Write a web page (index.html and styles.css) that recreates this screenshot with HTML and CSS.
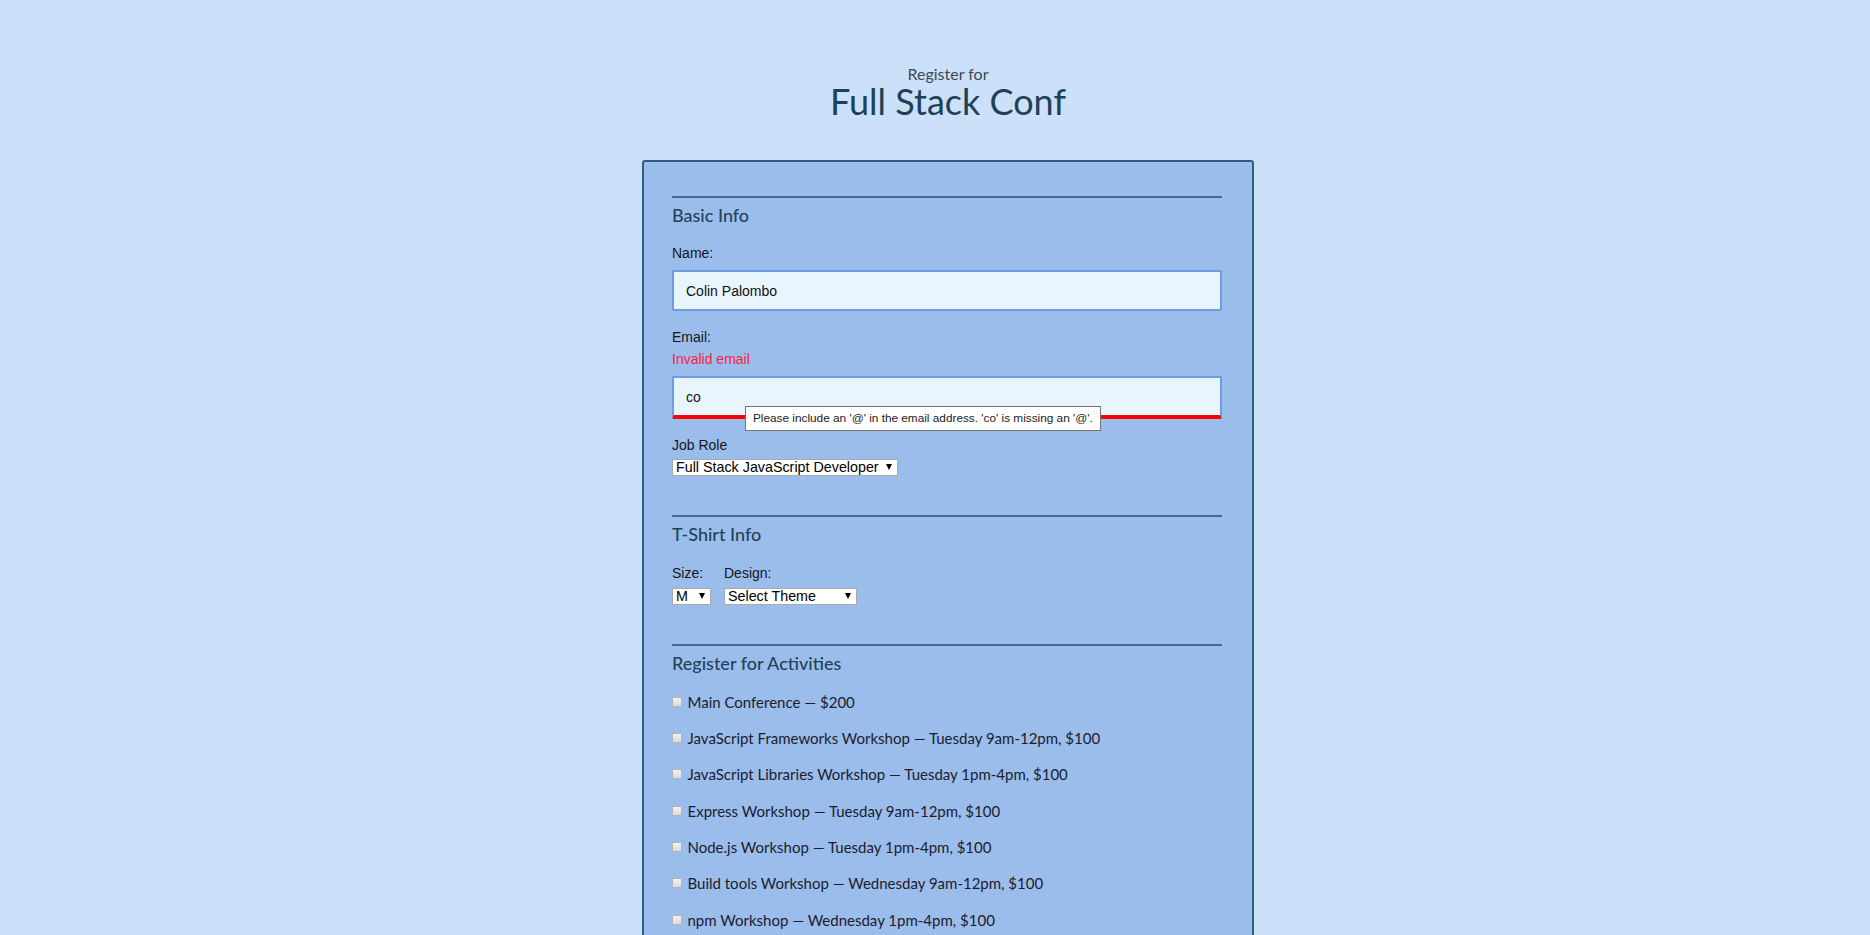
FILE: index.html
```html
<!DOCTYPE html>
<html lang="en">
<head>
<meta charset="utf-8">
<title>Full Stack Conf</title>
<link rel="stylesheet" href="styles.css">
</head>
<body>
<div class="page">
  <header class="masthead">
    <span class="pre">Register for</span>
    <h1 class="title">Full Stack Conf</h1>
  </header>

  <form class="form" novalidate>
    <section class="sec">
      <h2 class="sec-h">Basic Info</h2>
      <label class="lbl" for="name">Name:</label>
      <input class="txt" type="text" id="name" value="Colin Palombo">

      <label class="lbl" for="mail">Email:</label>
      <p class="err">Invalid email</p>
      <div class="field">
        <input class="txt txt-invalid" type="email" id="mail" value="co">
        <div class="tip">Please include an '@' in the email address. 'co' is missing an '@'.</div>
      </div>

      <label class="lbl" for="title">Job Role</label>
      <div class="sel-row">
        <span class="sel sel-job"><select id="title"><option>Full Stack JavaScript Developer</option></select></span>
      </div>
    </section>

    <section class="sec">
      <h2 class="sec-h">T-Shirt Info</h2>
      <div class="shirt">
        <div class="shirt-col">
          <label class="lbl lbl-tight" for="size">Size:</label>
          <span class="sel sel-size"><select id="size"><option>M</option></select></span>
        </div>
        <div class="shirt-col">
          <label class="lbl lbl-tight" for="design">Design:</label>
          <span class="sel sel-design"><select id="design"><option>Select Theme</option></select></span>
        </div>
      </div>
    </section>

    <section class="sec">
      <h2 class="sec-h">Register for Activities</h2>
      <ul class="acts">
        <li class="act"><label><input type="checkbox" class="cb"><span>Main Conference — $200</span></label></li>
        <li class="act"><label><input type="checkbox" class="cb"><span>JavaScript Frameworks Workshop — Tuesday 9am-12pm, $100</span></label></li>
        <li class="act"><label><input type="checkbox" class="cb"><span>JavaScript Libraries Workshop — Tuesday 1pm-4pm, $100</span></label></li>
        <li class="act"><label><input type="checkbox" class="cb"><span>Express Workshop — Tuesday 9am-12pm, $100</span></label></li>
        <li class="act"><label><input type="checkbox" class="cb"><span>Node.js Workshop — Tuesday 1pm-4pm, $100</span></label></li>
        <li class="act"><label><input type="checkbox" class="cb"><span>Build tools Workshop — Wednesday 9am-12pm, $100</span></label></li>
        <li class="act"><label><input type="checkbox" class="cb"><span>npm Workshop — Wednesday 1pm-4pm, $100</span></label></li>
      </ul>
    </section>

    <section class="sec">
      <h2 class="sec-h">Payment Info</h2>
      <label class="lbl" for="payment">I'm going to pay with:</label>
      <div class="sel-row">
        <span class="sel sel-pay"><select id="payment"><option>Credit Card</option></select></span>
      </div>
    </section>
  </form>
</div>
</body>
</html>
```

FILE: styles.css
```css
* {
  box-sizing: border-box;
}

html,
body {
  margin: 0;
}

body {
  background: #cce0fa;
  font-family: "Liberation Sans", Arial, sans-serif;
  color: #1b1b1b;
}

.page {
  padding: 66px 0 0 26px;
}

.masthead {
  text-align: center;
  font-family: Lato, "Noto Sans", sans-serif;
}

.pre {
  display: block;
  font-size: 16px;
  line-height: 16px;
  color: #3d4b55;
}

.title {
  margin: 0;
  font-size: 36px;
  line-height: 38px;
  font-weight: 400;
  color: #1d4257;
}

.form {
  width: 612px;
  margin: 40px auto 0;
  background: #9bbdec;
  border: 2px solid #2d5f80;
  border-radius: 3px;
  padding: 34px 30px 160px 28px;
}

.sec {
  border-top: 2px solid #3f6d8f;
}

.sec + .sec {
  margin-top: 39px;
}

.sec-h {
  margin: 5px 0 0;
  font-family: Lato, "Noto Sans", sans-serif;
  font-size: 18px;
  line-height: 24px;
  font-weight: 500;
  color: #1f4358;
}

.lbl {
  display: block;
  margin-top: 18px;
  font-size: 14px;
  line-height: 16px;
  color: #161616;
}

.lbl-tight {
  margin-top: 0;
}

.err {
  margin: 6px 0 0;
  font-size: 14px;
  line-height: 16px;
  color: #ff1d3a;
}

.txt {
  display: block;
  width: 100%;
  height: 41px;
  margin-top: 9px;
  padding: 0 12px;
  border: 2px solid #6e9ce0;
  border-radius: 2px;
  background: #e9f5fc;
  font-family: "Liberation Sans", Arial, sans-serif;
  font-size: 14px;
  color: #111;
  outline: none;
}

.field {
  position: relative;
  margin-top: 9px;
}

.field .txt {
  margin-top: 0;
}

.txt-invalid {
  height: 43px;
  border-bottom: 4px solid #ff0000;
}

.tip {
  position: absolute;
  left: 73px;
  top: 30px;
  height: 25px;
  padding: 4px 7px;
  border: 1px solid #767676;
  background: #ffffff;
  font-family: "Liberation Sans", Arial, sans-serif;
  font-size: 11.8px;
  line-height: 15px;
  color: #222;
  white-space: nowrap;
  z-index: 2;
}

.sel-row {
  display: flex;
  margin-top: 6px;
}

.sel {
  position: relative;
  display: block;
  height: 17px;
}

.sel select {
  appearance: none;
  -webkit-appearance: none;
  display: block;
  width: 100%;
  height: 17px;
  margin: 0;
  padding: 0 12px 0 3px;
  border: 1px solid #a9a9a9;
  border-radius: 0;
  background: #ffffff;
  font-family: "Liberation Sans", Arial, sans-serif;
  font-size: 14.3px;
  line-height: 15px;
  color: #000;
}

.sel::after {
  content: "";
  position: absolute;
  right: 6px;
  top: 5px;
  width: 0;
  height: 0;
  border-left: 3px solid transparent;
  border-right: 3px solid transparent;
  border-top: 6px solid #000;
  pointer-events: none;
}

.sel-job {
  width: 226px;
}

.sel-size {
  width: 39px;
}

.sel-design {
  width: 133px;
}

.sel-pay {
  width: 120px;
}

.shirt {
  display: flex;
  gap: 13px;
  margin-top: 19px;
}

.shirt-col {
  display: flex;
  flex-direction: column;
  gap: 7px;
}

.acts {
  list-style: none;
  margin: 17.5px 0 0;
  padding: 0;
}

.act + .act {
  margin-top: 18.4px;
}

.act label {
  display: flex;
  align-items: center;
  font-family: Lato, "Noto Sans", sans-serif;
  font-size: 15px;
  line-height: 18px;
  color: #1c1c2c;
}

.cb {
  appearance: none;
  -webkit-appearance: none;
  flex: none;
  width: 10px;
  height: 10px;
  margin: 0 5.5px 0 0;
  border: 1px solid #b3b3b3;
  border-radius: 1px;
  background: linear-gradient(#f2f2f2, #dcdcdc);
}
```
